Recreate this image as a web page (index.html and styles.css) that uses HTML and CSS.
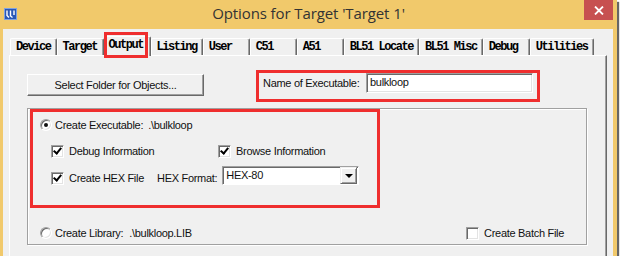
FILE: index.html
```html
<!DOCTYPE html>
<html>
<head>
    <meta charset="UTF-8">
    <title>Options for Target 'Target 1'</title>
    <link rel="stylesheet" href="styles.css">
</head>
<body>
    <div class="window">
        <div class="titlebar">
            <svg class="app-icon" width="13" height="12" viewBox="0 0 13 12">
                <rect x="0" y="0" width="13" height="12" fill="#2a57b5"/>
                <rect x="0.5" y="0.5" width="12" height="11" fill="none" stroke="#7fa2e0"/>
                <path d="M3 2.5V7.5L5 9.5M6.5 2.5V8L8.5 9.5M10 2.5V7" fill="none" stroke="#fff" stroke-width="1.4"/>
            </svg>
            <div class="title">Options for Target 'Target 1'</div>
            <div class="close">
                <svg width="10" height="9" viewBox="0 0 10 9">
                    <path d="M1 0.5L9 8.5M9 0.5L1 8.5" stroke="#fff" stroke-width="1.8"/>
                </svg>
            </div>
        </div>
        <div class="client">
            <ul class="tabs">
                <li>Device</li>
                <li>Target</li>
                <li class="active">Output</li>
                <li>Listing</li>
                <li>User</li>
                <li>C51</li>
                <li>A51</li>
                <li>BL51 Locate</li>
                <li>BL51 Misc</li>
                <li>Debug</li>
                <li>Utilities</li>
            </ul>
            <div class="page">
                <div class="top-row">
                    <div class="btn">Select Folder for Objects...</div>
                    <div class="mark name-box">
                        <span class="lbl">Name of Executable:</span>
                        <div class="edit">bulkloop</div>
                    </div>
                </div>
                <div class="group">
                    <div class="mark exe-box">
                        <div class="opt"><span class="radio on"></span>Create Executable:<span class="path">.\bulkloop</span></div>
                        <div class="checks">
                            <div class="opt first"><span class="check on"></span>Debug Information</div>
                            <div class="opt"><span class="check on"></span>Browse Information</div>
                        </div>
                        <div class="hex-row">
                            <div class="opt"><span class="check on"></span>Create HEX File</div>
                            <span class="lbl">HEX Format:</span>
                            <div class="combo"><span>HEX-80</span><span class="drop"></span></div>
                        </div>
                    </div>
                    <div class="lib-row">
                        <div class="opt"><span class="radio"></span>Create Library:<span class="path lib">.\bulkloop.LIB</span></div>
                        <div class="opt"><span class="check"></span>Create Batch File</div>
                    </div>
                </div>
            </div>
        </div>
    </div>
</body>
</html>
```

FILE: styles.css
```css
html, body, ul, li{margin: 0;padding: 0;}
body{background: #fff;font-family: "Liberation Sans", Arial, sans-serif;font-size: 11px;letter-spacing: -0.3px;color: #111;}

.window{width: 617px;height: 256px;background: #f1c96b;box-shadow: 2px 2px 1px rgba(0,0,0,.6);display: flex;flex-direction: column;}
.titlebar{height: 29px;display: grid;grid-template-columns: 1fr auto 1fr;align-items: start;}
.app-icon{margin: 8px 0 0 4px;}
.title{font-family: "Open Sans", sans-serif;font-size: 15px;line-height: 26px;letter-spacing: -0.1px;color: #333;}
.close{justify-self: end;width: 29px;height: 20px;margin-right: 4px;background: #c75050;display: flex;align-items: center;justify-content: center;}

.client{flex: 1;margin: 0 4px 0 3px;background: #f0f0f0;display: flex;flex-direction: column;overflow: hidden;padding-top: 9px;}

.tabs{list-style: none;margin-left: 7px;display: flex;align-items: flex-end;height: 17px;}
.tabs li{box-sizing: border-box;min-width: 47px;height: 17px;padding: 0 5px;font-family: "Liberation Mono", "Courier New", monospace;font-weight: bold;font-size: 12px;letter-spacing: -1.45px;line-height: 16px;color: #000;border-top: 1px solid #fff;border-left: 1px solid #fff;border-right: 1px solid #696969;box-shadow: inset -1px 0 #a0a0a0;border-radius: 2px 2px 0 0;}
.tabs li:first-child{min-width: 43px;}
.tabs li.active{position: relative;z-index: 1;height: 20px;margin-bottom: -1px;padding-left: 4px;background: #f0f0f0;}
.tabs li.active::after{content: "";position: absolute;left: -1px;top: -5px;width: 44px;height: 26px;box-sizing: border-box;border: 3px solid #ef2e2e;}

.page{flex: 1;margin: 0 6px;border-top: 1px solid #fff;border-left: 1px solid #fff;border-right: 1px solid #696969;box-shadow: inset -1px 0 #a0a0a0;padding: 14px 0 0 17px;}

.mark{box-sizing: border-box;border: 3px solid #ef2e2e;}

.top-row{display: flex;align-items: flex-start;}
.btn{box-sizing: border-box;width: 177px;height: 22px;margin-top: 4px;line-height: 20px;text-align: center;background: #f0f0f0;border: 1px solid;border-color: #fff #696969 #696969 #fff;box-shadow: inset -1px -1px #a0a0a0;}
.name-box{width: 284px;margin-left: 52px;padding: 0 4px 6px 4px;display: flex;align-items: flex-start;}
.name-box .lbl{line-height: 20px;}
.edit{box-sizing: border-box;width: 167px;height: 20px;margin-left: auto;padding: 1px 3px;line-height: 14px;background: #fff;border: 1px solid;border-color: #a0a0a0 #fff #fff #a0a0a0;box-shadow: inset 1px 1px #696969, inset -1px -1px #e3e3e3;}

.group{box-sizing: border-box;width: 560px;height: 137px;margin-top: 6px;padding-bottom: 3px;border: 1px solid #a0a0a0;box-shadow: inset 1px 1px #fff, 1px 1px #fff;display: flex;flex-direction: column;}
.exe-box{width: 350px;height: 99px;margin-left: 2px;padding: 5px 0 0 7px;display: flex;flex-direction: column;}

.opt{display: flex;align-items: center;height: 16px;line-height: 16px;}
.path{margin-left: 5px;}
.path.lib{margin-left: 6px;}

.radio, .check{box-sizing: border-box;display: flex;align-items: center;justify-content: center;background: #fff;border: 1px solid;border-color: #a0a0a0 #fff #fff #a0a0a0;box-shadow: inset 1px 1px #696969, inset -1px -1px #e3e3e3;}
.radio{width: 12px;height: 12px;margin-right: 3px;border-radius: 50%;}
.radio.on::after{content: "";width: 4px;height: 4px;border-radius: 50%;background: #111;}
.check{width: 13px;height: 13px;margin-right: 5px;}
.check.on::after{content: "";width: 3px;height: 6px;margin-top: -2px;border: solid #000;border-width: 0 2px 2px 0;transform: rotate(40deg);}

.checks{display: flex;margin: 10px 0 0 11px;}
.checks .first{width: 167px;}
.hex-row{display: flex;align-items: flex-start;margin: 7px 0 0 11px;}
.hex-row .opt{margin-top: 4px;}
.hex-row .lbl{margin: 4px 0 0 13px;line-height: 16px;}
.combo{box-sizing: border-box;width: 137px;height: 19px;margin-left: 5px;padding: 1px 1px 1px 3px;display: flex;background: #fff;border: 1px solid;border-color: #a0a0a0 #fff #fff #a0a0a0;box-shadow: inset 1px 1px #696969;}
.combo span:first-child{flex: 1;line-height: 14px;}
.drop{box-sizing: border-box;width: 17px;height: 17px;margin-top: -1px;display: flex;align-items: center;justify-content: center;background: #f0f0f0;border: 1px solid;border-color: #f0f0f0 #696969 #696969 #f0f0f0;box-shadow: inset 1px 1px #fff, inset -1px -1px #a0a0a0;}
.drop::after{content: "";border: 4px solid transparent;border-top: 4px solid #000;border-bottom: 0;}

.lib-row{display: flex;justify-content: space-between;align-items: center;margin-top: auto;padding: 0 22px 0 12px;}
```
